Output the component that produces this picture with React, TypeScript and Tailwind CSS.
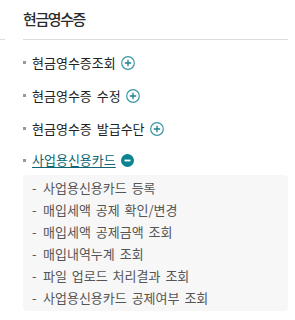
import React from 'react';

const font = { fontFamily: '"Noto Sans CJK KR", "Noto Sans", sans-serif' };

function PlusIcon() {
  return (
    <svg width="14" height="14" viewBox="0 0 14 14" className="shrink-0">
      <circle cx="7" cy="7" r="6.3" fill="none" stroke="#3b97a4" strokeWidth="1.2" />
      <path d="M7 3.8v6.4M3.8 7h6.4" stroke="#1f7f8d" strokeWidth="1.3" />
    </svg>
  );
}

function MinusIcon() {
  return (
    <svg width="13" height="13" viewBox="0 0 13 13" className="shrink-0">
      <circle cx="6.5" cy="6.5" r="6.5" fill="#0b8391" />
      <path d="M3.5 6.5h6" stroke="#fff" strokeWidth="1.8" />
    </svg>
  );
}

const menus = ['현금영수증조회', '현금영수증 수정', '현금영수증 발급수단'];
const subs = [
  '사업용신용카드 등록',
  '매입세액 공제 확인/변경',
  '매입세액 공제금액 조회',
  '매입내역누계 조회',
  '파일 업로드 처리결과 조회',
  '사업용신용카드 공제여부 조회',
];

export default function App() {
  return (
    <div className="w-[295px] h-[320px] bg-white overflow-hidden" style={font}>
      <div className="flex items-end h-[40px]">
        <div className="w-[5px] border-b border-[#dcdcdc]" />
        <div className="ml-[18px] mr-[7px] flex-1 h-[40px] border-b border-[#dcdcdc] pt-[9px]">
          <h1 className="text-[15px] leading-[20px] tracking-[-1.4px] font-medium text-[#2b2b2b]">현금영수증</h1>
        </div>
      </div>
      <ul className="pl-[23px] pr-[7px] pt-[6px]">
        {menus.map((m) => (
          <li key={m} className="flex items-center h-[33px]">
            <span className="w-[3px] h-[3px] bg-[#999] mr-[6px] shrink-0" />
            <span className="text-[13px] text-[#222] mr-[5px] [word-spacing:2px]">{m}</span>
            <PlusIcon />
          </li>
        ))}
        <li className="flex items-center h-[30px]">
          <span className="w-[3px] h-[3px] bg-[#999] mr-[6px] shrink-0" />
          <span className="text-[13px] text-[#0f6573] underline underline-offset-2 mr-[5px]">사업용신용카드</span>
          <MinusIcon />
        </li>
        <li className="bg-[#f7f7f7] rounded-[4px] pt-[2px] pb-[2px] pl-[9px]">
          {subs.map((s) => (
            <div key={s} className="flex text-[13px] leading-[22px] text-[#555] [word-spacing:2px]">
              <span className="w-[11px]">-</span>
              <span>{s}</span>
            </div>
          ))}
        </li>
      </ul>
    </div>
  );
}
